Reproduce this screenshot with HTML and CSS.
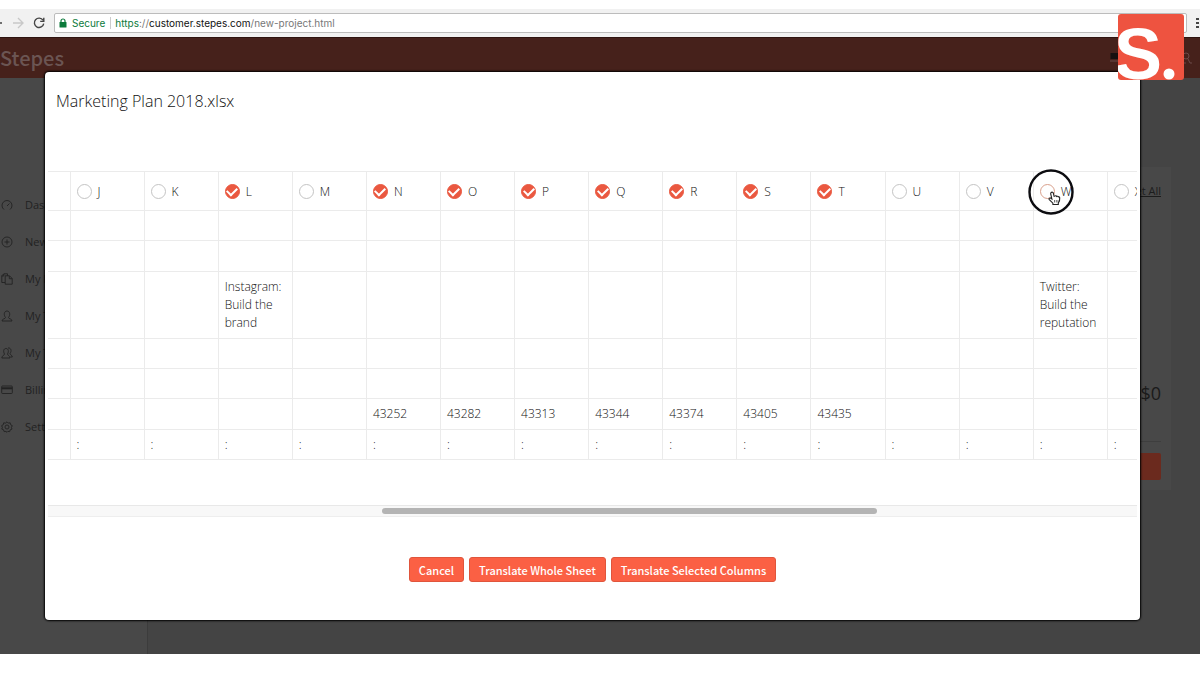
FILE: index.html
```html
<!DOCTYPE html>
<html lang="en">

<head>
  <meta charset="UTF-8" />
  <meta name="viewport" content="width=device-width, initial-scale=1.0" />
  <title>Stepes - New Project</title>
  <link rel="stylesheet" href="styles.css">
</head>

<body>

  <div class="browser-bar">
    <button class="nav-btn back" aria-label="Back">
      <svg width="12" height="12" viewBox="0 0 12 12"><path d="M11 6H1M5 2L1 6l4 4" /></svg>
    </button>
    <button class="nav-btn forward" aria-label="Forward">
      <svg width="12" height="12" viewBox="0 0 12 12"><path d="M1 6h10M6 1l5 5-5 5" /></svg>
    </button>
    <button class="nav-btn" aria-label="Reload">
      <svg width="12" height="12" viewBox="0 0 12 12"><path d="M10 3.2A4.7 4.7 0 1 0 10.7 6.6M10.8 .8v3.6H7.2" /></svg>
    </button>
    <div class="address">
      <svg class="lock" width="8" height="10" viewBox="0 0 8 10">
        <rect x="0.5" y="4" width="7" height="5.5" rx="0.6" fill="#0b7a3b" />
        <path d="M2 4.5V3a2 2 0 0 1 4 0v1.500" fill="none" stroke="#0b7a3b" stroke-width="1.2" />
      </svg>
      <span class="secure">Secure</span>
      <span class="url"><span class="scheme">https</span>://<span class="host">customer.stepes.com</span>/new-project.html</span>
    </div>
    <button class="nav-btn menu" aria-label="Menu">
      <svg width="4" height="12" viewBox="0 0 4 12"><path d="M0 2h3M0 6h3M0 10h3" stroke-width="2" /></svg>
    </button>
  </div>

  <div class="page">
    <header class="site-header">
      <a class="brand" href="#">Stepes</a>
      <div class="header-icons">
        <svg width="14" height="10" viewBox="0 0 14 10"><rect x="0.500" y="1" width="10" height="6" fill="#17100f" /><path d="M0 9h14" stroke="#6b4a48" /></svg>
        <svg width="10" height="12" viewBox="0 0 10 12" fill="none" stroke="#6b4a48"><circle cx="4" cy="4" r="3" /><path d="M0 11h4M6 7l2 4h2" /></svg>
      </div>
    </header>

    <div class="layout">
      <nav class="sidebar">
        <a href="#">
          <svg viewBox="0 0 12 12"><path d="M3 10.500A5 5 0 1 1 9 10.500M6 7l2.500-2.500" /></svg>
          Dashboard</a>
        <a href="#">
          <svg viewBox="0 0 12 12"><circle cx="6" cy="6" r="5" /><path d="M6 3.500v5M3.500 6h5" /></svg>
          New Project</a>
        <a href="#">
          <svg viewBox="0 0 12 12"><path d="M4 9.500H.8V2.800L2.800 .8H6.500v2M4.200 2.800h4.300l2.700 2.700v5.700h-7zM8.300 3v2.700H11M.8 3h2V1" /></svg>
          My Projects</a>
        <a href="#">
          <svg viewBox="0 0 12 12"><path d="M4.500 7.500C2.500 5 3 1 6 1s3.500 4 1.500 6.500c0 1.500 3.500 1 3.500 3.500H1C1 8.500 4.500 9 4.500 7.500z" /></svg>
          My Translators</a>
        <a href="#">
          <svg viewBox="0 0 12 12"><path d="M3.500 7C2 4.500 2.500 1.500 5 1.500S8 4.500 6.500 7c0 1.500 2.500 1.500 2.500 4H.8C.8 8.500 3.500 8.500 3.500 7zM7 1c3-.5 4 3 2 5.500 0 1.500 2.300 1.500 2.300 3.500H9.500" /></svg>
          My Team</a>
        <a href="#">
          <svg viewBox="0 0 12 12"><rect x="0.700" y="2" width="10.600" height="7.500" rx="0.800" /><path d="M.7 4.300h10.600" stroke-width="2" /></svg>
          Billing</a>
        <a href="#">
          <svg viewBox="0 0 12 12"><path d="M6 .8l1.300 1.300 1.900-.3.4 1.900 1.700 1-.9 1.600.6 1.800-1.800.7-.5 1.800-1.900-.2L6 11.300 5 10.400l-1.900.2-.5-1.800L.8 8.100l.6-1.800L.6 4.700l1.700-1 .4-1.900 1.900.3z" /><circle cx="6" cy="6" r="2" /></svg>
          Settings</a>
      </nav>

      <main class="content">
        <section class="quote">
          <a class="reset" href="#">Reset All</a>
          <p class="total">$0</p>
          <button class="order" aria-label="Order"></button>
        </section>
      </main>
    </div>
  </div>

  <div class="modal" role="dialog" aria-labelledby="file-name">
    <h1 id="file-name">Marketing Plan 2018.xlsx</h1>

    <div class="sheet-wrap">
      <table class="sheet">
        <thead>
          <tr>
            <th class="edge"></th>
            <th><label><input type="checkbox">J</label></th>
            <th><label><input type="checkbox">K</label></th>
            <th><label><input type="checkbox" checked>L</label></th>
            <th><label><input type="checkbox">M</label></th>
            <th><label><input type="checkbox" checked>N</label></th>
            <th><label><input type="checkbox" checked>O</label></th>
            <th><label><input type="checkbox" checked>P</label></th>
            <th><label><input type="checkbox" checked>Q</label></th>
            <th><label><input type="checkbox" checked>R</label></th>
            <th><label><input type="checkbox" checked>S</label></th>
            <th><label><input type="checkbox" checked>T</label></th>
            <th><label><input type="checkbox">U</label></th>
            <th><label><input type="checkbox">V</label></th>
            <th class="pointed"><label><input type="checkbox">W</label>
              <svg class="pointer" width="46" height="46" viewBox="0 0 46 46">
                <circle cx="23" cy="23" r="21.500" fill="none" stroke="#0c0c10" stroke-width="2.400" />
                <path d="M23.200 23.500c.8-.8 2-.3 2.200.8l.7 3 .9-.4c.8-.4 1.500 0 1.600.5.7-.4 1.500 0 1.700.5.8-.3 1.400.2 1.400 1l-.2 3-1.200 2v1.600h-5.400v-1.300l-3.600-3.600c-.8-1 .2-2 1.200-1.500l1.400.9-1.200-5.200c-.1-.5.100-1 .5-1.300z" fill="#fff" stroke="#222" stroke-width="1.100" />
                <path d="M26.500 31v2.500M28.300 31v2.500M30 31v2.500" stroke="#333" stroke-width="0.700" />
              </svg>
            </th>
            <th><label><input type="checkbox">X</label></th>
          </tr>
        </thead>
        <tbody>
          <tr><td></td><td></td><td></td><td></td><td></td><td></td><td></td><td></td><td></td><td></td><td></td><td></td><td></td><td></td><td></td><td></td></tr>
          <tr><td></td><td></td><td></td><td></td><td></td><td></td><td></td><td></td><td></td><td></td><td></td><td></td><td></td><td></td><td></td><td></td></tr>
          <tr><td></td><td></td><td></td><td>Instagram: Build the brand</td><td></td><td></td><td></td><td></td><td></td><td></td><td></td><td></td><td></td><td></td><td>Twitter: Build the reputation</td><td></td></tr>
          <tr><td></td><td></td><td></td><td></td><td></td><td></td><td></td><td></td><td></td><td></td><td></td><td></td><td></td><td></td><td></td><td></td></tr>
          <tr><td></td><td></td><td></td><td></td><td></td><td></td><td></td><td></td><td></td><td></td><td></td><td></td><td></td><td></td><td></td><td></td></tr>
          <tr><td></td><td></td><td></td><td></td><td></td><td>43252</td><td>43282</td><td>43313</td><td>43344</td><td>43374</td><td>43405</td><td>43435</td><td></td><td></td><td></td><td></td></tr>
          <tr><td></td><td>:</td><td>:</td><td>:</td><td>:</td><td>:</td><td>:</td><td>:</td><td>:</td><td>:</td><td>:</td><td>:</td><td>:</td><td>:</td><td>:</td><td>:</td></tr>
        </tbody>
      </table>
    </div>

    <div class="scroll-track">
      <div class="scroll-thumb"></div>
    </div>

    <div class="button-group">
      <button class="btn">Cancel</button>
      <button class="btn">Translate Whole Sheet</button>
      <button class="btn">Translate Selected Columns</button>
    </div>
  </div>

  <svg class="watermark" width="66" height="67" viewBox="0 0 66 67">
    <rect width="66" height="66" rx="3" fill="#ee5340" />
    <text x="-4" y="65" class="watermark-letter">S</text>
    <circle cx="51" cy="60" r="5.500" fill="#fff" />
  </svg>

</body>

</html>
```

FILE: styles.css
```css
* {
  box-sizing: border-box;
}

body {
  margin: 0;
  padding: 9px 0 21px;
  min-height: 100vh;
  display: flex;
  flex-direction: column;
  position: relative;
  overflow-x: hidden;
  background: #fff;
  font-family: "Open Sans", sans-serif;
  font-size: 12px;
  color: #333;
}

button {
  font-family: inherit;
  cursor: pointer;
}

/* browser bar */
.browser-bar {
  display: flex;
  align-items: center;
  gap: 9px;
  height: 28px;
  background: #f1f1f1;
  overflow: hidden;
}

.nav-btn {
  display: flex;
  flex: none;
  padding: 0;
  border: none;
  background: none;
}

.nav-btn svg {
  fill: none;
  stroke: #444;
  stroke-width: 1.4;
}

.back {
  margin-left: -9px;
}

.forward svg {
  stroke: #c8c8c8;
}

.address {
  flex: 1;
  display: flex;
  align-items: center;
  height: 20px;
  padding: 0 4px;
  background: #fff;
  border: 1px solid #bcbcbc;
  border-radius: 2px;
  font-family: Inter, sans-serif;
  font-size: 10px;
  line-height: 18px;
  color: #777;
}

.secure {
  margin: 0 4px 0 5px;
  padding-right: 5px;
  line-height: 12px;
  border-right: 1px solid #ccc;
}

.secure,
.scheme {
  color: #0b7a3b;
}

.host {
  color: #111;
}

/* dimmed page */
.page {
  flex: 1;
  display: flex;
  flex-direction: column;
  background: #444;
}

.site-header {
  display: flex;
  align-items: center;
  justify-content: space-between;
  height: 41px;
  padding-right: 8px;
  background: #46211b;
  border-top: 1px solid #2e1310;
}

.brand {
  font-family: "Noto Sans CJK SC", sans-serif;
  font-size: 20px;
  font-weight: 500;
  line-height: 38px;
  color: #6b5553;
  text-decoration: none;
}

.header-icons {
  display: flex;
  gap: 58px;
}

.layout {
  flex: 1;
  display: flex;
}

.sidebar {
  width: 148px;
  padding-top: 108px;
  background: #484848;
  border-right: 1px solid #3c3c3c;
}

.sidebar a {
  display: flex;
  align-items: center;
  gap: 12px;
  height: 37px;
  padding-left: 1px;
  font-size: 11px;
  color: #222;
  text-decoration: none;
}

.sidebar svg {
  width: 12px;
  height: 12px;
  fill: none;
  stroke: #222;
  stroke-width: 0.9;
}

.content {
  flex: 1;
  padding: 89px 29px 0;
}

.quote {
  display: flex;
  flex-direction: column;
  align-items: flex-end;
  width: 320px;
  margin-left: auto;
  padding: 15px 10px 10px;
  background: #484848;
}

.reset {
  font-size: 11px;
  line-height: 18px;
  color: #1c1c1c;
}

.total {
  align-self: stretch;
  margin: 181px 0 11px;
  padding-bottom: 36px;
  border-bottom: 1px solid #3e3e3e;
  font-size: 18px;
  line-height: 24px;
  text-align: right;
  color: #1a1a1a;
}

.order {
  width: 100%;
  height: 27px;
  border: none;
  border-radius: 2px;
  background: #6b2a1e;
}

/* column picker */
.modal {
  position: absolute;
  top: 72px;
  left: 45px;
  right: 60px;
  padding: 17px 3px 38px;
  background: #fff;
  border-radius: 4px;
  box-shadow: 0 0 2px 1px #000;
}

.modal h1 {
  margin: 0 8px 49px;
  font-size: 16px;
  font-weight: 300;
  line-height: 25px;
  color: #111;
}

.sheet-wrap {
  padding-top: 8px;
  overflow: hidden;
}

.sheet {
  width: calc(100% + 45px);
  height: 289px;
  table-layout: fixed;
  border-collapse: collapse;
}

.sheet th,
.sheet td {
  padding: 6px 6px 5px;
  border: 1px solid #ebebeb;
  font-weight: 300;
  line-height: 18px;
  text-align: left;
  color: #111;
}

.sheet td {
  height: 30px;
}

.sheet th {
  height: 39px;
}

.sheet .edge {
  width: 22px;
}

.sheet tr > :first-child {
  border-left: none;
}

.sheet label {
  display: flex;
  align-items: center;
  gap: 6px;
}

.sheet input {
  appearance: none;
  display: grid;
  place-content: center;
  width: 15px;
  height: 15px;
  margin: 0;
  border: 1px solid #c4c4c4;
  border-radius: 50%;
  background: #fff;
}

.sheet input:checked {
  border-color: #ea5840;
  background: #ea5840;
}

.sheet input:checked::before {
  content: "";
  width: 8px;
  height: 5px;
  margin-top: -2px;
  border-left: 2px solid #fff;
  border-bottom: 2px solid #fff;
  transform: rotate(-45deg);
}

.pointed {
  position: relative;
}

.pointed input {
  border-color: #d9a08c;
}

.pointer {
  position: absolute;
  top: -3px;
  left: -6px;
}

.scroll-track {
  margin-top: 45px;
  padding: 2px 0;
  background: #f8f8f8;
  border-top: 1px solid #e8e8e8;
  border-bottom: 1px solid #eee;
}

.scroll-thumb {
  width: 45.4%;
  height: 6px;
  margin-left: 30.7%;
  border-radius: 3px;
  background: #b4b4b4;
}

.button-group {
  display: flex;
  justify-content: center;
  gap: 5px;
  margin-top: 40px;
}

.btn {
  height: 25px;
  padding: 0 9px;
  border: 1px solid #e0553c;
  border-radius: 3px;
  background: #fb6044;
  color: #fff;
  font-family: "Noto Sans CJK SC", sans-serif;
  font-size: 11px;
  font-weight: 500;
  line-height: 22px;
}

.btn:hover {
  background: #e9523a;
}

.watermark {
  position: absolute;
  top: 14px;
  right: 16px;
}

.watermark-letter {
  font-family: "Liberation Sans", sans-serif;
  font-size: 72px;
  font-weight: 700;
  fill: #fff;
}
```
